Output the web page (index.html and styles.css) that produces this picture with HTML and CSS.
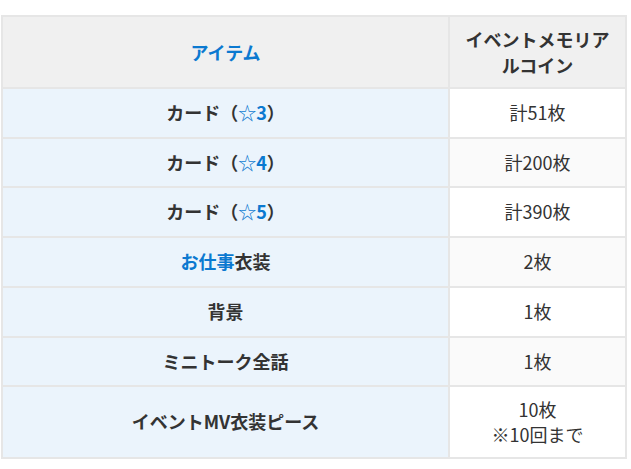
FILE: index.html
```html
<!DOCTYPE html>
<html lang="ja">
<head>
<meta charset="utf-8">
<link rel="stylesheet" href="styles.css">
</head>
<body>
<div class="wrap">
<table class="tbl">
  <colgroup><col class="c1"><col class="c2"></colgroup>
  <thead>
    <tr class="compact">
      <th class="item"><span class="blue">アイテム</span></th>
      <th class="coin">イベントメモリアルコイン</th>
    </tr>
  </thead>
  <tbody>
    <tr><td class="name">カード（<span class="blue star">☆</span><span class="blue">3</span>）</td><td class="val">計51枚</td></tr>
    <tr class="alt"><td class="name">カード（<span class="blue star">☆</span><span class="blue">4</span>）</td><td class="val">計200枚</td></tr>
    <tr><td class="name">カード（<span class="blue star">☆</span><span class="blue">5</span>）</td><td class="val">計390枚</td></tr>
    <tr class="alt"><td class="name"><span class="blue">お仕事</span>衣装</td><td class="val">2枚</td></tr>
    <tr><td class="name">背景</td><td class="val">1枚</td></tr>
    <tr class="alt"><td class="name">ミニトーク全話</td><td class="val">1枚</td></tr>
    <tr class="compact"><td class="name">イベントMV衣装ピース</td><td class="val">10枚<br>※10回まで</td></tr>
  </tbody>
</table>
</div>
</body>
</html>
```
FILE: styles.css
```css
html, body {
  margin: 0;
  padding: 0;
  background: #ffffff;
}
body {
  font-family: "Noto Sans CJK JP", "Noto Sans", sans-serif;
  color: #333333;
}
.wrap {
  padding: 15px 0 0 1px;
}
.tbl {
  border-collapse: collapse;
  table-layout: fixed;
  width: 624px;
  border: 2px solid #e6e6e6;
  font-size: 18px;
}
.c1 { width: 447px; }
.c2 { width: 177px; }
.tbl th,
.tbl td {
  border: 2px solid #e6e6e6;
  text-align: center;
  vertical-align: middle;
  padding: 11px 10px;
  line-height: 25.7px;
}
.tbl th {
  background: #f0f0f0;
  font-weight: bold;
  color: #333333;
  line-height: 26px;
}
.tbl .compact th,
.tbl .compact td {
  padding: 9px 10px;
}
.tbl .compact td.val {
  line-height: 25px;
  padding: 10px 10px 10px;
}
.tbl td.name {
  background: #ebf4fc;
  font-weight: bold;
  color: #333333;
}
.tbl td.val {
  background: #ffffff;
  font-weight: normal;
  color: #333333;
}
.tbl tr.alt td.val {
  background: #fafafa;
}
.blue {
  color: #0b79d0;
}
.star {
  font-weight: normal;
}
```
